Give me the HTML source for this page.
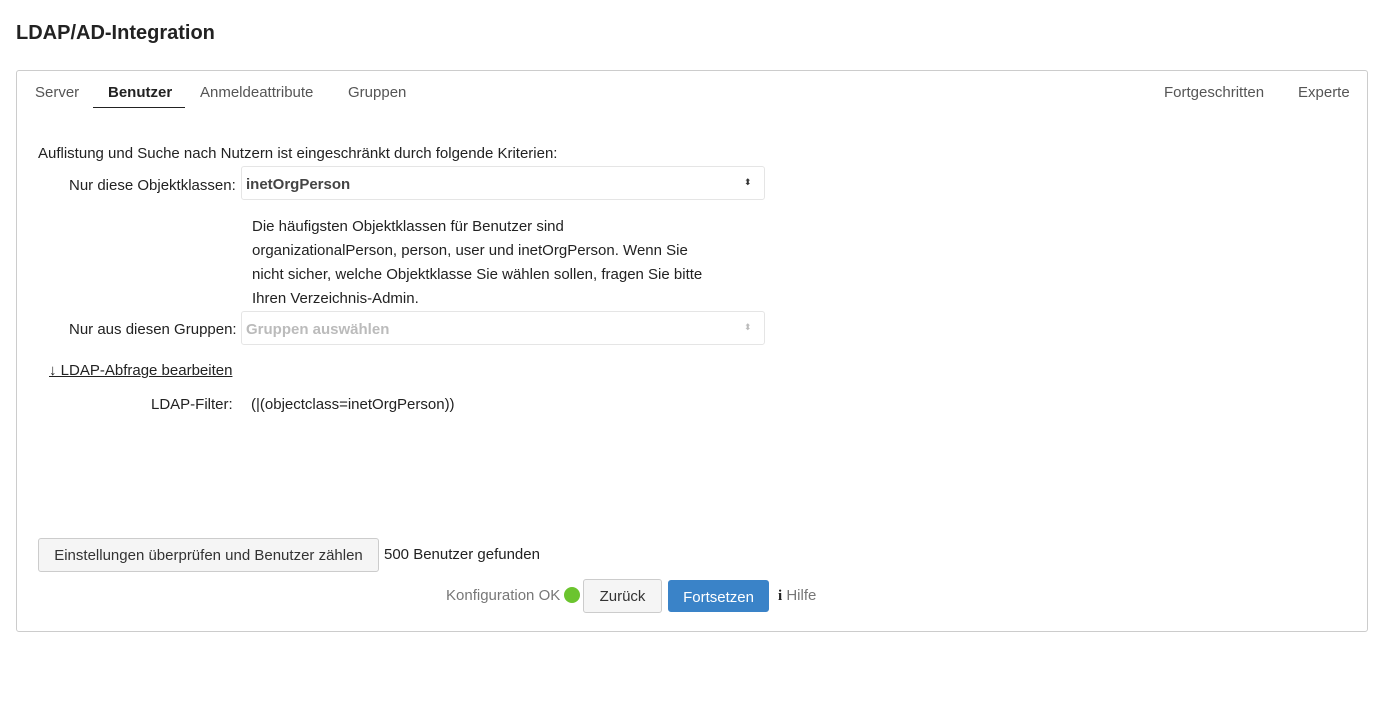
<!DOCTYPE html>
<html><head><meta charset="utf-8"><style>
body{margin:0;width:1382px;height:711px;background:#fff;font-family:"Liberation Sans",sans-serif;color:#222;font-size:15px;position:relative;overflow:hidden}
.a{position:absolute;white-space:nowrap}
h1{position:absolute;left:16px;top:22px;margin:0;font-size:20px;font-weight:bold;color:#222}
.box{position:absolute;left:16px;top:70px;width:1350px;height:560px;border:1px solid #ccc;border-radius:3px}
.tab{color:#555;top:84px}
.sel{position:absolute;left:241px;width:522px;height:32px;border:1px solid #e5e5e5;border-radius:3px}
.btn{position:absolute;border:1px solid #ccc;background:#f5f5f5;border-radius:3px;color:#333;text-align:center;box-sizing:border-box}
</style></head><body>
<h1>LDAP/AD-Integration</h1>
<div class="box"></div>
<div class="a tab" style="left:35px">Server</div>
<div class="a tab" style="left:108px;color:#222;font-weight:bold">Benutzer</div>
<div class="a" style="left:93px;top:107px;width:92px;height:1px;background:#222"></div>
<div class="a tab" style="left:200px">Anmeldeattribute</div>
<div class="a tab" style="left:348px">Gruppen</div>
<div class="a tab" style="left:1164px">Fortgeschritten</div>
<div class="a tab" style="left:1298px">Experte</div>
<div class="a" style="left:38px;top:145px">Auflistung und Suche nach Nutzern ist eingeschränkt durch folgende Kriterien:</div>
<div class="a" style="left:69px;top:177px">Nur diese Objektklassen:</div>
<div class="sel" style="top:166px"></div>
<div class="a" style="left:246px;top:176px;font-weight:bold;color:#444">inetOrgPerson</div>
<div class="a" style="left:744px;top:177px;font-size:9px;color:#333">⬍</div>
<div class="a" style="left:252px;top:215px;line-height:24px;white-space:normal;width:480px">Die häufigsten Objektklassen für Benutzer sind<br>organizationalPerson, person, user und inetOrgPerson. Wenn Sie<br>nicht sicher, welche Objektklasse Sie wählen sollen, fragen Sie bitte<br>Ihren Verzeichnis-Admin.</div>
<div class="a" style="left:69px;top:321px">Nur aus diesen Gruppen:</div>
<div class="sel" style="top:311px"></div>
<div class="a" style="left:246px;top:321px;font-weight:bold;color:#bbb">Gruppen auswählen</div>
<div class="a" style="left:744px;top:322px;font-size:9px;color:#bbb">⬍</div>
<div class="a" style="left:49px;top:362px;text-decoration:underline">↓ LDAP-Abfrage bearbeiten</div>
<div class="a" style="left:151px;top:396px">LDAP-Filter:</div>
<div class="a" style="left:251px;top:396px">(|(objectclass=inetOrgPerson))</div>
<div class="btn" style="left:38px;top:538px;width:341px;height:34px;line-height:34px">Einstellungen überprüfen und Benutzer zählen</div>
<div class="a" style="left:384px;top:546px">500 Benutzer gefunden</div>
<div class="a" style="left:446px;top:587px;color:#777">Konfiguration OK</div>
<div class="a" style="left:564px;top:587px;width:16px;height:16px;border-radius:50%;background:#6bc42e"></div>
<div class="btn" style="left:583px;top:579px;width:79px;height:34px;line-height:34px">Zurück</div>
<div class="btn" style="left:668px;top:580px;width:101px;height:32px;line-height:33px;background:#3a83c8;border-color:#3a83c8;color:#fff">Fortsetzen</div>
<div class="a" style="left:778px;top:587px;color:#777"><b style="color:#222;font-family:'Liberation Serif',serif">i</b> Hilfe</div>
</body></html>
